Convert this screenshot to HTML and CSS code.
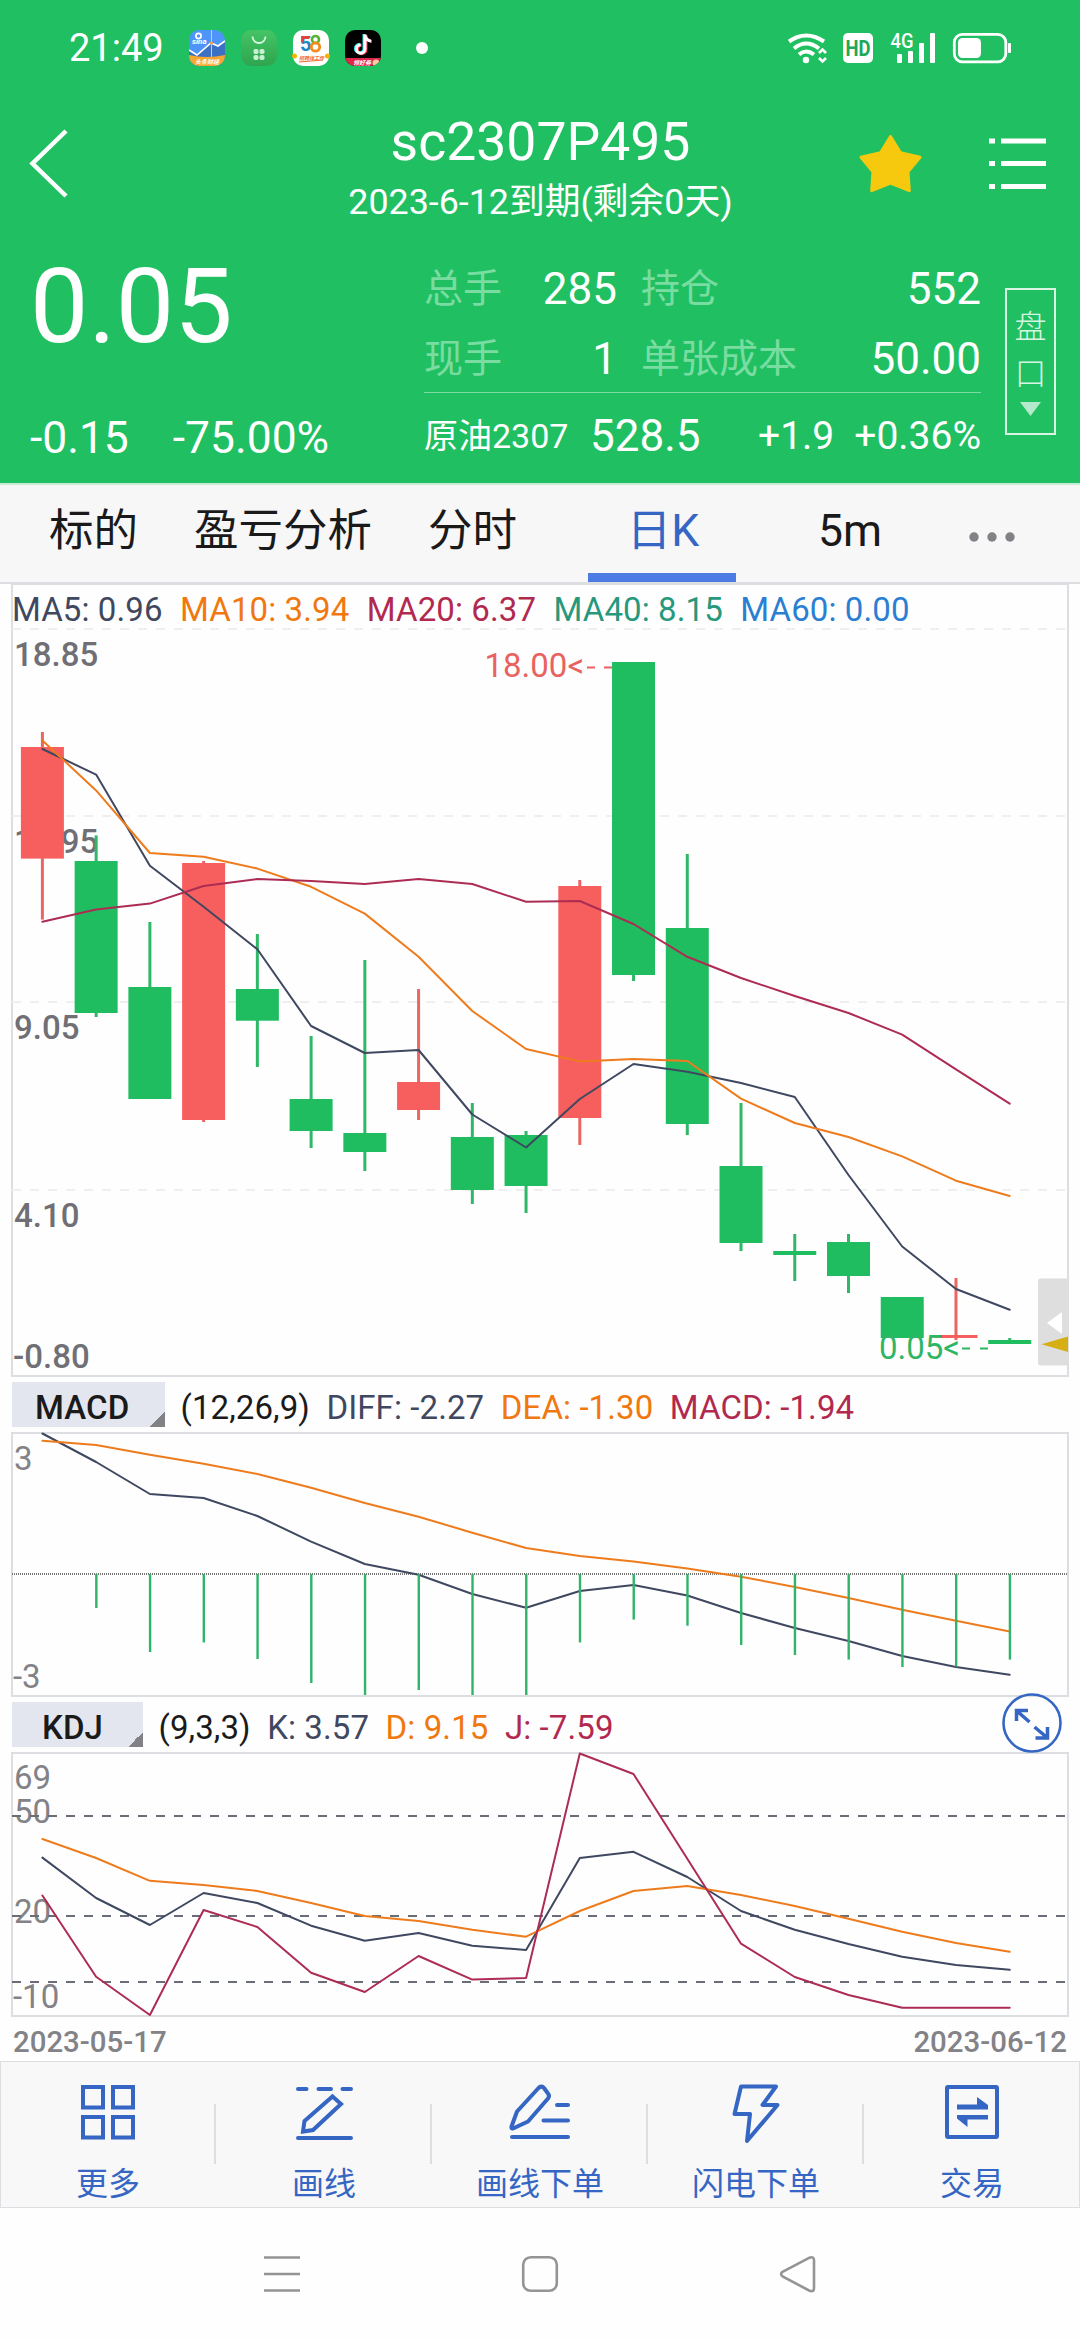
FILE: index.html
```html
<!DOCTYPE html>
<html lang="zh-CN">
<head>
    <meta charset="UTF-8">
    <meta name="viewport" content="width=device-width, initial-scale=1.0">
    <title>sc2307P495</title>
    <link rel="stylesheet" href="styles.css">
</head>
<body>
    <header class="header">
        <div class="status-bar">
            <span class="clock">21:49</span>
            <div class="app-icons">
                <svg width="36" height="36" viewBox="0 0 36 36">
                    <clipPath id="round"><rect width="36" height="36" rx="10"/></clipPath>
                    <g clip-path="url(#round)">
                        <rect width="36" height="36" fill="#4f94f8"/>
                        <path d="M0 20l8 5 14-12 7 3 7-5v25H0z" fill="#3b70c4"/>
                        <path d="M0 20l8 5 14-12 7 3 7-5" fill="none" stroke="#fff" stroke-width="1.6"/>
                        <path d="M22.500 0v28" stroke="#f3c98b" stroke-width="1"/>
                        <circle cx="22.500" cy="13" r="1.500" fill="#f5a02c"/>
                        <path d="M0 25q18 4 36 0v11H0z" fill="#f5a731"/>
                        <circle cx="9.500" cy="6" r="2.600" fill="none" stroke="#fff" stroke-width="1.700"/>
                        <text x="3" y="14" font-size="8" font-weight="700" font-style="italic" fill="#fff">sina</text>
                        <text x="6" y="34" font-size="6" font-weight="700" font-style="italic" fill="#fff">头条财经</text>
                    </g>
                </svg>
                <svg width="36" height="36" viewBox="0 0 36 36">
                    <defs><linearGradient id="leaf" x1="0" y1="0" x2="0" y2="1"><stop offset="0" stop-color="#45c466"/><stop offset="1" stop-color="#2ea44e"/></linearGradient></defs>
                    <rect width="36" height="36" rx="10" fill="url(#leaf)"/>
                    <path d="M11.500 6.500a6.500 6.500 0 0 0 13 0" fill="none" stroke="#d5f5dc" stroke-width="1.800"/>
                    <g fill="#c8f0d2"><rect x="12.500" y="19" width="5" height="5" rx="1.800"/><rect x="18.500" y="19" width="5" height="5" rx="1.800"/><rect x="12.500" y="25" width="5" height="5" rx="1.800"/><rect x="18.500" y="25" width="5" height="5" rx="1.800"/></g>
                </svg>
                <svg width="36" height="36" viewBox="0 0 36 36">
                    <rect width="36" height="36" rx="10" fill="#fff"/>
                    <text x="7" y="21" font-size="20" font-weight="700" fill="#1c86c9">5</text>
                    <path d="M16 7.500H9.500v5" fill="none" stroke="#e0453a" stroke-width="2.800"/>
                    <circle cx="22.500" cy="9.500" r="3.500" fill="none" stroke="#58b331" stroke-width="2.600"/>
                    <circle cx="22.500" cy="17" r="4.200" fill="none" stroke="#f28a1e" stroke-width="2.800"/>
                    <circle cx="1.500" cy="26" r="2.500" fill="#f5b400"/><circle cx="34.500" cy="26" r="2.500" fill="#f5b400"/>
                    <text x="6" y="30" font-size="5" font-weight="700" font-style="italic" fill="#ef6a2f">招聘找工作</text>
                    <path d="M6 32l24-2" stroke="#ef6a2f" stroke-width="1"/>
                </svg>
                <svg width="36" height="36" viewBox="0 0 36 36">
                    <g clip-path="url(#round)">
                        <rect width="36" height="36" fill="#000"/>
                        <g fill="none" stroke-width="3">
                            <path d="M19 4v14.500a4.300 4.300 0 1 1-4.300-4.300M19 5q1 5 6 5.500" stroke="#2af0ea"/>
                            <path d="M21 5v14.500a4.300 4.300 0 1 1-4.300-4.300M21 6q1 5 6 5.500" stroke="#fe2c55"/>
                            <path d="M20 4.500V19a4.300 4.300 0 1 1-4.300-4.300M20 5.500q1 5 6 5.500" stroke="#fff"/>
                        </g>
                        <rect y="28" width="36" height="8" fill="#e0264a"/>
                        <text x="8" y="34.500" font-size="6" font-weight="700" font-style="italic" fill="#fff">领好券</text>
                        <circle cx="31" cy="33" r="3.500" fill="#f3cfa5"/>
                    </g>
                </svg>
            </div>
            <span class="status-dot"></span>
            <svg class="status-icons" width="226" height="36" viewBox="787 30 226 36" fill="#fff">
                <g fill="none" stroke="#fff" stroke-width="4">
                    <path d="M789 41.500q17-12 35 0"/>
                    <path d="M794 48.500q12-10 25 0"/>
                    <path d="M799 54.500q7-6 15 0"/>
                    <path d="M819 53l3.500-3.500L826 53M819 58l3.500 3.500L826 58" stroke-width="2.600"/>
                </g>
                <circle cx="806" cy="60" r="3.200"/>
                <rect x="843" y="33" width="30" height="30" rx="5"/>
                <text class="hd" x="845.500" y="56" textLength="25" lengthAdjust="spacingAndGlyphs">HD</text>
                <text class="net" x="890.500" y="48" textLength="23" lengthAdjust="spacingAndGlyphs">4G</text>
                <rect x="897" y="54" width="5" height="9" rx="1"/>
                <rect x="908" y="51" width="5" height="12" rx="1"/>
                <rect x="919" y="43" width="5" height="20" rx="1"/>
                <rect x="930" y="33" width="5" height="30" rx="1"/>
                <rect x="954.300" y="34.300" width="51.500" height="27.500" rx="8" fill="none" stroke="#fff" stroke-width="2.800"/>
                <rect x="958" y="38" width="23" height="20" rx="4.500"/>
                <rect x="1008" y="43" width="3" height="10" rx="1"/>
            </svg>
        </div>

        <div class="title-bar">
            <svg class="back" width="44" height="72" viewBox="26 127 44 72"><path d="M66 131L32.500 163.500 66 196" fill="none" stroke="#fff" stroke-width="4.500"/></svg>
            <div class="title">
                <h1>sc2307P495</h1>
                <p>2023-6-12到期(剩余0天)</p>
            </div>
            <div class="title-actions">
                <svg width="66" height="62" viewBox="856.500 133 66 62"><path d="M890 136.500l10 16.200 19.500 4.500-12 14.500 1.300 19-18.800-7.700-18.800 7.700 1.300-19-12-14.500 19.500-4.500z" fill="#f6c90e" stroke="#f6c90e" stroke-width="3" stroke-linejoin="round"/></svg>
                <svg width="58" height="52" viewBox="988 138 58 52" fill="#fff">
                    <rect x="989" y="138.500" width="6" height="5"/><rect x="1001" y="138.500" width="45" height="5"/>
                    <rect x="989" y="161" width="6" height="5"/><rect x="1001" y="161" width="45" height="5"/>
                    <rect x="989" y="184" width="6" height="5"/><rect x="1001" y="184" width="45" height="5"/>
                </svg>
            </div>
        </div>

        <section class="quote">
            <div class="price-block">
                <div class="price">0.05</div>
                <div class="change"><span>-0.15</span><span>-75.00%</span></div>
            </div>
            <div class="stats">
                <div class="stat-row">
                    <span class="label">总手</span><b class="volume">285</b>
                    <span class="label">持仓</span><b class="wide">552</b>
                </div>
                <div class="stat-row lined">
                    <span class="label">现手</span><b class="volume">1</b>
                    <span class="label">单张成本</span><b class="wide">50.00</b>
                </div>
                <div class="stat-row target">
                    <span class="name">原油2307</span><b>528.5</b>
                    <span class="diff">+1.9</span><span class="percent">+0.36%</span>
                </div>
            </div>
            <div class="depth">
                <span>盘</span><span>口</span>
                <svg width="21" height="14" viewBox="0 0 21 14"><path d="M0 0h21L10.500 14z" fill="#b5e9cb"/></svg>
            </div>
        </section>
    </header>

    <nav class="tabs">
        <a class="tab">标的</a>
        <a class="tab">盈亏分析</a>
        <a class="tab">分时</a>
        <a class="tab active">日K</a>
        <a class="tab">5m</a>
        <svg class="more" width="46" height="12" viewBox="0 0 46 12" fill="#828186"><circle cx="5" cy="6" r="4.700"/><circle cx="23" cy="6" r="4.700"/><circle cx="41" cy="6" r="4.700"/></svg>
    </nav>

    <main>
        <div class="chart main-chart">
            <div class="ma-legend">
                <span class="navy">MA5: 0.96</span>
                <span class="orange">MA10: 3.94</span>
                <span class="crimson">MA20: 6.37</span>
                <span class="teal">MA40: 8.15</span>
                <span class="blue">MA60: 0.00</span>
            </div>
            <svg width="1054" height="747" viewBox="13 628 1054 747">
                <g class="grid"><path d="M12 629H1067M12 816H1067M12 1002H1067M12 1190H1067"/></g>
                <g class="axis bold">
                    <text x="14" y="666">18.85</text>
                    <text x="14" y="853">13.95</text>
                    <text x="14" y="1039">9.05</text>
                    <text x="14" y="1227">4.10</text>
                    <text x="13" y="1367.500">-0.80</text>
                </g>
                <g id="candles"></g>
                <g id="maLines"></g>
                <g class="mark high"><text x="484.500" y="677">18.00&lt;</text><path d="M587 667.500h8M604 667.500h8"/></g>
                <g class="mark low"><text x="879" y="1359">0.05&lt;</text><path d="M962 1348.500h8M980 1348.500h8"/></g>
                <path d="M1068 1278.500h-27q-3 0-3 3v81q0 3 3 3h27z" fill="#dedede"/>
                <path d="M1062 1312v22l-15-11z" fill="#fff"/>
                <path d="M1068 1336.500v15.500l-26.500-7.800z" fill="#d6af12"/>
            </svg>
        </div>

        <div class="indicator">
            <span class="picker macd">MACD</span>
            <span class="params">(12,26,9)</span>
            <span class="navy">DIFF: -2.27</span>
            <span class="orange">DEA: -1.30</span>
            <span class="crimson">MACD: -1.94</span>
        </div>
        <div class="chart">
            <svg width="1054" height="261" viewBox="13 1434 1054 261">
                <path d="M12 1574H1067" stroke="#777" stroke-width="2" stroke-dasharray="1 1"/>
                <g class="axis"><text x="14" y="1469.500">3</text><text x="13" y="1688">-3</text></g>
                <g id="macdLines"></g>
                <g id="macdBars"></g>
            </svg>
        </div>

        <div class="indicator">
            <span class="picker kdj">KDJ</span>
            <span class="params">(9,3,3)</span>
            <span class="navy">K: 3.57</span>
            <span class="orange">D: 9.15</span>
            <span class="crimson">J: -7.59</span>
            <svg class="expand" width="62" height="62" viewBox="-31 -31 62 62" fill="none" stroke="#3566c4">
                <circle r="28.500" stroke-width="2.600"/>
                <path d="M-15.500-2v-10.500H-4M-15-12L-2.500-1M15.500 4v11H3.500M15 14.500L2.500 4" stroke-width="3.500"/>
            </svg>
        </div>
        <div class="chart">
            <svg width="1054" height="261" viewBox="13 1754 1054 261">
                <g class="axis">
                    <text x="14" y="1789">69</text>
                    <text x="14" y="1823">50</text>
                    <text x="14" y="1922.500">20</text>
                    <text x="13" y="2008">-10</text>
                </g>
                <g class="levels"><path d="M12 1816H1067M12 1916H1067M12 1982H1067"/></g>
                <g id="kdjLines"></g>
            </svg>
        </div>
        <div class="dates"><span>2023-05-17</span><span>2023-06-12</span></div>
    </main>

    <footer class="toolbar">
        <a class="tool">
            <svg width="60" height="60" viewBox="78 2082 60 60" fill="none" stroke="#3566c4" stroke-width="4"><rect x="83" y="2087" width="20" height="20.500"/><rect x="113" y="2087" width="20" height="20.500"/><rect x="83" y="2117" width="20" height="20.500"/><rect x="113" y="2117" width="20" height="20.500"/></svg>
            更多
        </a>
        <a class="tool">
            <svg width="60" height="60" viewBox="294 2082 60 60" fill="none" stroke="#3566c4" stroke-width="4" stroke-linecap="round"><path d="M298 2089h8.500M318.500 2089h12.500M342.500 2089h8.500M298 2138h53"/><path d="M332.500 2096.500l8.500 7.500-28 26-10 1.500 1.500-10.500z"/></svg>
            画线
        </a>
        <a class="tool">
            <svg width="64" height="60" viewBox="508 2082 64 60" fill="none" stroke="#3566c4" stroke-width="4" stroke-linecap="round" stroke-linejoin="round"><path d="M512 2137h56M543.500 2120.500H568M557 2105h11"/><path d="M539 2087.500q3-2 5 .5l4 5.500q2 2.500 0 5l-20 23-15 7q-2 .5-1.500-2l5.500-15z"/></svg>
            画线下单
        </a>
        <a class="tool">
            <svg width="60" height="60" viewBox="726 2082 60 60" fill="none" stroke="#3566c4" stroke-width="4" stroke-linejoin="round"><path d="M741 2086.500h35l-13.500 18.500h15L747 2141l3-27h-15.500z"/></svg>
            闪电下单
        </a>
        <a class="tool">
            <svg width="60" height="60" viewBox="942 2082 60 60" fill="#3566c4"><rect x="947" y="2087" width="50" height="50" rx="1" fill="none" stroke="#3566c4" stroke-width="4"/><path d="M957 2104.500h20V2097l11 8v4.500h-31zM988 2119.500h-20.500v7.500l-10.500-8.500v-3.500h31z"/></svg>
            交易
        </a>
    </footer>

    <div class="nav-bar">
        <svg width="36" height="36" viewBox="0 0 36 36"><path d="M0 1.500h36M0 18h36M0 34.500h36"/></svg>
        <svg width="36" height="36" viewBox="0 0 36 36"><rect x="1.200" y="1.200" width="33.600" height="33.600" rx="7.500"/></svg>
        <svg width="36" height="36" viewBox="0 0 36 36"><path d="M2.500 15.800L29.500 1.700q4.500-1.500 4.500 2.500v28q0 4-4.500 2.500L2.500 20.300q-2.800-2.200 0-4.500z"/></svg>
    </div>

    <script>
        const START = 42.4, STEP = 53.74;
        const NAVY = '#3f4860', ORANGE = '#ee7b1c', CRIMSON = '#ad2c54';
        const xAt = i => START + i * STEP;

        // [up, high, bodyTop, bodyBottom, low]
        const candles = [
            [1, 732, 747, 858.6, 919.6], [0, 835.4, 861, 1013, 1017], [0, 922, 987, 1099, 1099],
            [1, 861, 863, 1120, 1122], [0, 934, 989, 1020.7, 1067], [0, 1036, 1099, 1131, 1148],
            [0, 960, 1133, 1152, 1171], [1, 989, 1082, 1110, 1120], [0, 1103, 1137, 1190, 1204],
            [0, 1131, 1135, 1186, 1213], [1, 880, 886, 1118, 1145], [0, 662, 662, 975, 981],
            [0, 854, 928, 1124, 1135], [0, 1103, 1166, 1243, 1251], [0, 1234, 1251, 1255, 1281],
            [0, 1234, 1242, 1276, 1293], [0, 1297, 1297, 1338, 1338], [1, 1278, 1335, 1338, 1340],
            [0, 1338, 1340, 1344, 1344]
        ];
        const ma5 = [749, 774.6, 865.7, 906.8, 949.3, 1026, 1053, 1050, 1114.5, 1147.5, 1099, 1064, 1071.8, 1083, 1097, 1175, 1246.5, 1289, 1309.7];
        const ma10 = [740.4, 790.4, 853, 856.8, 868.6, 886.8, 913.6, 956.8, 1011, 1049, 1061.4, 1059, 1061, 1098.6, 1123, 1137, 1156.4, 1180.7, 1196];
        const ma20 = [921.8, 909.6, 903.6, 886, 879, 881, 884, 879, 884, 901.8, 901, 924, 956.8, 978, 996, 1013, 1034.6, 1069.3, 1103.6];
        const diff = [1433.5, 1462, 1494, 1498, 1516, 1541.6, 1564, 1574.7, 1594, 1607.8, 1591, 1585, 1595.5, 1613, 1628, 1641, 1656, 1667, 1674.7];
        const dea = [1440.8, 1445, 1454.7, 1463.7, 1474, 1487.8, 1503, 1516.7, 1532.7, 1548, 1556, 1561.6, 1568.6, 1576.7, 1587, 1598, 1609.8, 1620.8, 1631.4];
        const bars = [1574, 1608, 1652, 1642.4, 1659, 1683, 1695, 1690, 1695, 1695, 1642.4, 1619.6, 1625.7, 1645, 1655, 1659.6, 1667, 1666.5, 1659.6];
        const k = [1857.6, 1898, 1925, 1893, 1903, 1925.7, 1940.8, 1933, 1945.7, 1950, 1858, 1851.8, 1877, 1911, 1929.8, 1944, 1956.7, 1965, 1969.8];
        const d = [1839, 1858, 1880.8, 1885, 1891, 1903, 1916, 1921, 1929.8, 1936.7, 1911, 1891, 1886, 1895, 1906, 1918.8, 1931.8, 1943, 1951.8];
        const j = [1895.5, 1976.7, 2015, 1910, 1927, 1972.7, 1992, 1956, 1979.6, 1978, 1753.5, 1774, 1858.8, 1943.7, 1977, 1995, 2007.8, 2007.8, 2007.8];

        function line(values, color) {
            const points = values.map((y, i) => `${xAt(i).toFixed(1)},${y}`).join(' ');
            return `<polyline class="line" points="${points}" stroke="${color}"/>`;
        }

        document.getElementById('candles').innerHTML = candles.map(([up, high, top, bottom, low], i) => `
            <g class="${up ? 'up' : 'down'}">
                <rect class="wick" x="${xAt(i) - 1.5}" y="${high}" width="3" height="${low - high}"/>
                <rect x="${xAt(i) - 21.5}" y="${top}" width="43" height="${bottom - top}"/>
            </g>`).join('');
        document.getElementById('maLines').innerHTML = line(ma5, NAVY) + line(ma10, ORANGE) + line(ma20, CRIMSON);
        document.getElementById('macdLines').innerHTML = line(diff, NAVY) + line(dea, ORANGE);
        document.getElementById('macdBars').innerHTML = bars.map((y, i) =>
            `<rect x="${xAt(i) - 1}" y="1574" width="2.4" height="${y - 1574}" fill="#2fb46a"/>`).join('');
        document.getElementById('kdjLines').innerHTML = line(k, NAVY) + line(d, ORANGE) + line(j, CRIMSON);
    </script>
</body>
</html>
```

FILE: styles.css
```css
* {
    box-sizing: border-box;
}
body {
    margin: 0;
    width: 1080px;
    height: 2340px;
    overflow: hidden;
    background: #fefefe;
    font-family: Roboto, "Noto Sans CJK SC", sans-serif;
    color: #1a1a1a;
}
svg {
    display: block;
    overflow: visible;
    flex: none;
}
h1, p {
    margin: 0;
    font-weight: 400;
}
b {
    font-weight: 400;
}
.header {
    height: 485px;
    background: #20c062;
    border-bottom: 2px solid #c9ecd6;
    color: #fff;
}

/* status bar */
.status-bar {
    display: flex;
    align-items: center;
    height: 96px;
    padding: 0 67px 0 69px;
}
.clock {
    width: 120px;
    font-size: 38px;
    line-height: 96px;
}
.app-icons {
    display: flex;
    gap: 16px;
}
.status-dot {
    width: 12px;
    height: 12px;
    margin-left: 35px;
    border-radius: 50%;
    background: #fff;
}
.status-icons {
    margin-left: auto;
}
.hd {
    font-size: 22px;
    font-weight: 700;
    fill: #20a858;
}
.net {
    font-size: 21px;
    font-weight: 500;
}

/* title */
.title-bar {
    display: grid;
    grid-template-columns: 1fr auto 1fr;
    height: 132px;
    padding: 0 34px 0 26px;
}
.back {
    margin-top: 31px;
}
.title {
    padding: 16px 0 0 9px;
    text-align: center;
}
.title h1 {
    font-size: 53.5px;
    line-height: 60px;
}
.title p {
    margin-top: 10px;
    font-size: 35.8px;
    line-height: 41px;
}
.title-actions {
    display: flex;
    justify-content: flex-end;
    align-items: center;
    gap: 65px;
    padding-top: 3px;
}

/* quote */
.quote {
    display: flex;
    height: 255px;
    padding-left: 30px;
}
.price-block {
    width: 394px;
    padding-top: 24px;
}
.price {
    font-size: 104px;
    line-height: 110px;
}
.change {
    display: flex;
    gap: 44px;
    margin-top: 51px;
    font-size: 44.4px;
    line-height: 50px;
}
.stats {
    width: 557px;
    padding-top: 26px;
    font-size: 44px;
    line-height: 70px;
}
.stat-row {
    display: flex;
    height: 70px;
}
.stat-row.lined {
    height: 69px;
    border-bottom: 1px solid #7bdda3;
}
.label {
    font-size: 39px;
    color: #79dca1;
}
.volume {
    width: 115px;
    margin-right: 24px;
    text-align: right;
}
.wide {
    margin-left: auto;
}
.target {
    line-height: 86px;
}
.target .name {
    width: 166px;
    font-size: 34px;
}
.target .diff {
    margin-left: auto;
    font-size: 39px;
}
.target .percent {
    margin-left: 20px;
    font-size: 39px;
}
.depth {
    display: flex;
    flex-direction: column;
    align-items: center;
    width: 51px;
    height: 147px;
    margin: 60px 0 0 24px;
    padding-top: 14px;
    border: 2px solid #d8f5e4;
    font-size: 32px;
    font-weight: 300;
    line-height: 47px;
    color: #d8f5e4;
}
.depth svg {
    margin-top: 4px;
}

/* tabs */
.tabs {
    display: flex;
    height: 99px;
    padding-left: 49px;
    background: #f7f7f7;
    border-bottom: 2px solid #dcdee2;
    font-size: 44.5px;
    line-height: 92px;
}
.tab + .tab {
    margin-left: 56px;
}
.tab.active {
    width: 148px;
    margin-left: 71px;
    padding-left: 2px;
    border-bottom: 9px solid #4d7be4;
    text-align: center;
    color: #3566c4;
}
.tab.active + .tab {
    margin-left: 82px;
}
.more {
    margin: 46px 0 0 87px;
}

/* charts */
.chart {
    margin: 0 11px;
    border: 2px solid #dcdee2;
}
.main-chart {
    border-top-width: 1px;
}
.ma-legend {
    display: flex;
    gap: 17.5px;
    height: 43px;
    padding-top: 7px;
    font-size: 33px;
    line-height: 36px;
    letter-spacing: 0.1px;
    margin-left: -1px;
}
.navy { color: #3f4860; }
.orange { color: #f0780f; }
.crimson { color: #b2294f; }
.teal { color: #27987c; }
.blue { color: #2b7fd3; }
.grid {
    stroke: #efefef;
    stroke-width: 2;
    stroke-dasharray: 9 9;
}
.levels {
    fill: none;
    stroke: #686d78;
    stroke-width: 2;
    stroke-dasharray: 9 9;
}
.axis {
    font-size: 33px;
    fill: #828287;
}
.axis.bold {
    font-weight: 500;
    fill: #6f6f75;
}
.up { fill: #f75f5e; }
.down { fill: #1fbd60; }
.up .wick { fill: #e86664; }
.down .wick { fill: #2fb867; }
.line {
    fill: none;
    stroke-width: 2;
    stroke-linejoin: round;
    stroke-linecap: round;
}
.mark {
    font-size: 33px;
    stroke-width: 2;
}
.mark text { stroke: none; }
.high { fill: #e8635f; stroke: #e8635f; }
.low { fill: #2eb666; stroke: #2eb666; }

/* indicator headings */
.indicator {
    position: relative;
    display: flex;
    gap: 16.5px;
    height: 55px;
    padding: 5px 0 0 12px;
    font-size: 33px;
    line-height: 51px;
    letter-spacing: 0.1px;
}
.picker {
    height: 45px;
    background: linear-gradient(135deg, transparent 50%, #828186 50%) right bottom / 15px 15px no-repeat #e3e6ef;
    font-weight: 500;
}
.picker.macd {
    width: 153px;
    padding-left: 23px;
}
.picker.kdj {
    width: 131px;
    padding-left: 30px;
}
.params {
    margin-left: -1px;
}
.expand {
    position: absolute;
    left: 1001px;
    top: -5px;
}
.dates {
    display: flex;
    justify-content: space-between;
    height: 44px;
    padding: 5px 13px 0 13px;
    font-size: 29.4px;
    font-weight: 500;
    line-height: 40px;
    color: #828287;
}

/* bottom toolbar */
.toolbar {
    display: flex;
    height: 147px;
    background: #f8f8f9;
    box-shadow: inset 0 0 0 1px #dcdee1;
}
.tool {
    display: flex;
    flex: 1;
    flex-direction: column;
    align-items: center;
    padding-top: 21px;
    background: linear-gradient(#dcdee2, #dcdee2) right 43px / 2px 60px no-repeat;
    font-size: 32px;
    line-height: 40px;
    color: #3566c4;
}
.tool:last-child {
    background: none;
}
.tool svg {
    height: 60px;
    margin-bottom: 22px;
}
.nav-bar {
    display: flex;
    justify-content: center;
    align-items: center;
    gap: 222px;
    height: 132px;
    fill: none;
    stroke: #949494;
    stroke-width: 2.6;
}
```
